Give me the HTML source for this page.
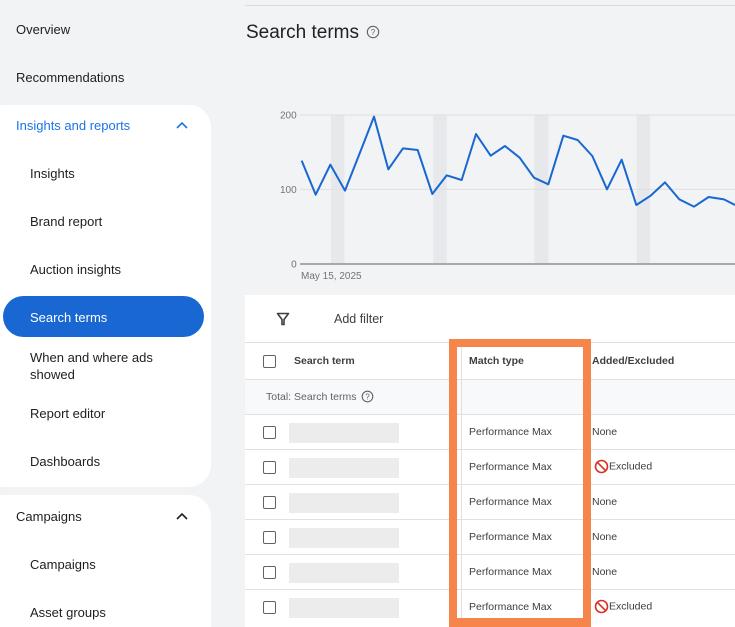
<!DOCTYPE html>
<html><head><meta charset="utf-8"><style>
*{margin:0;padding:0;box-sizing:border-box}
html{width:735px;height:627px;overflow:hidden}
body{width:735px;height:627px;overflow:hidden;background:#f1f3f4;font-family:"Liberation Sans",Arial,sans-serif;position:relative;color:#202124}
.a{position:absolute;white-space:nowrap}
.nav{font-size:13px;color:#202124}
.panel{position:absolute;background:#fff;border-radius:22px}
.row{position:absolute;left:245px;width:490px;height:35px;border-top:1px solid #e0e0e0;background:#fff}
.cb{position:absolute;left:18px;width:13px;height:13px;border:1.6px solid #5f6368;border-radius:2px;top:11px}
.ph{position:absolute;left:44px;top:8px;width:110px;height:20px;background:#ececec}
.mt{position:absolute;left:224px;top:11px;font-size:10.5px;color:#3c4043}
.ae{position:absolute;left:347px;top:11px;font-size:10.5px;color:#3c4043}
</style></head><body>
<div class="a nav" style="left:16px;top:22px">Overview</div>
<div class="a nav" style="left:16px;top:70px">Recommendations</div>
<div class="panel" style="left:-20px;top:105px;width:231px;height:382px"></div>
<div class="a nav" style="left:16px;top:118px;color:#1a73e8">Insights and reports</div>
<svg class="a" style="left:175px;top:120px" width="14" height="10"><path d="M2 8 L7 3 L12 8" fill="none" stroke="#1a73e8" stroke-width="1.6"/></svg>
<div class="a nav" style="left:30px;top:166px">Insights</div>
<div class="a nav" style="left:30px;top:214px">Brand report</div>
<div class="a nav" style="left:30px;top:262px">Auction insights</div>
<div class="a" style="left:3px;top:296px;width:201px;height:41px;background:#1967d2;border-radius:21px"></div>
<div class="a nav" style="left:30px;top:310px;color:#fff">Search terms</div>
<div class="a nav" style="left:30px;top:349px;line-height:17px;white-space:normal;width:140px">When and where ads showed</div>
<div class="a nav" style="left:30px;top:406px">Report editor</div>
<div class="a nav" style="left:30px;top:454px">Dashboards</div>
<div class="panel" style="left:-20px;top:495px;width:231px;height:132px;border-bottom-left-radius:0;border-bottom-right-radius:0"></div>
<div class="a nav" style="left:16px;top:509px">Campaigns</div>
<svg class="a" style="left:175px;top:511px" width="14" height="10"><path d="M2 8 L7 3 L12 8" fill="none" stroke="#202124" stroke-width="1.6"/></svg>
<div class="a nav" style="left:30px;top:557px">Campaigns</div>
<div class="a nav" style="left:30px;top:605px">Asset groups</div>

<div class="a" style="left:245px;top:5px;width:490px;height:1px;background:#dadce0"></div>
<div class="a" style="left:246px;top:22px;font-size:19px;color:#202124">Search terms</div>
<svg class="a" style="left:366px;top:25px" width="14" height="14"><circle cx="7" cy="7" r="5.7" fill="none" stroke="#5f6368" stroke-width="1.1"/><text x="7" y="10" font-size="8" text-anchor="middle" fill="#5f6368" font-family="Liberation Sans">?</text></svg>

<svg class="a" style="left:245px;top:90px" width="490" height="200" viewBox="0 0 1470 600">
<g fill="#e6e8eb"><rect x="258" y="75" width="40" height="447"/><rect x="565" y="75" width="40" height="447"/><rect x="868" y="75" width="42" height="447"/><rect x="1175" y="75" width="40" height="447"/></g>
<line x1="165" y1="75" x2="1470" y2="75" stroke="#e0e0e0" stroke-width="3"/>
<line x1="165" y1="298" x2="1470" y2="298" stroke="#e0e0e0" stroke-width="3"/>
<line x1="165" y1="522" x2="1470" y2="522" stroke="#9aa0a6" stroke-width="5"/>
<g font-family="Liberation Sans" font-size="30" fill="#70757a"><text x="155" y="85" text-anchor="end">200</text><text x="155" y="309" text-anchor="end">100</text><text x="155" y="533" text-anchor="end">0</text><text x="168" y="567">May 15, 2025</text></g>
<polyline fill="none" stroke="#1967d2" stroke-width="6" stroke-linejoin="round" points="170,212 212,314 256,224 300,302 344,190 387,80 430,238 474,175 518,180 562,312 605,256 650,270 693,132 737,197 780,168 824,203 867,263 910,283 955,137 998,150 1042,198 1086,298 1130,209 1174,345 1217,317 1260,277 1303,328 1347,350 1391,321 1437,328 1470,345"/>
</svg>

<div class="a" style="left:245px;top:295px;width:490px;height:332px;background:#fff"></div>
<svg class="a" style="left:276px;top:312px" width="14" height="14"><path d="M1.5 1.5 H12.5 L8 7.5 V12.5 H6 V7.5 Z" fill="none" stroke="#3c4043" stroke-width="1.6" stroke-linejoin="round"/></svg>
<div class="a" style="left:334px;top:312px;font-size:12.5px;color:#3c4043">Add filter</div>
<div class="row" style="top:342px;height:37px"><div class="cb" style="top:12px"></div><div class="a" style="left:49px;top:12px;font-size:10.5px;color:#3c4043;font-weight:bold">Search term</div><div class="a" style="left:224px;top:12px;font-size:10.5px;color:#3c4043;font-weight:bold">Match type</div><div class="a" style="left:347px;top:12px;font-size:10.5px;color:#3c4043;font-weight:bold">Added/Excluded</div></div>
<div class="row" style="top:379px;background:#f8f9fa"><div class="a" style="left:21px;top:11px;font-size:10.5px;color:#5f6368">Total: Search terms</div><svg class="a" style="left:116px;top:10px" width="13" height="13"><circle cx="6.5" cy="6.5" r="5.3" fill="none" stroke="#5f6368" stroke-width="1.1"/><text x="6.5" y="9.5" font-size="8" text-anchor="middle" fill="#5f6368" font-family="Liberation Sans">?</text></svg></div>
<div class="row" style="top:414px"><div class="cb"></div><div class="ph"></div><div class="mt">Performance Max</div><div class="ae">None</div></div>
<div class="row" style="top:449px"><div class="cb"></div><div class="ph"></div><div class="mt">Performance Max</div><div class="ae" style="left:349px;top:9px"><svg width="15" height="15" style="vertical-align:middle"><circle cx="7.5" cy="7.5" r="6" fill="none" stroke="#d93025" stroke-width="1.6"/><line x1="3.3" y1="3.3" x2="11.7" y2="11.7" stroke="#d93025" stroke-width="1.6"/></svg>Excluded</div></div>
<div class="row" style="top:484px"><div class="cb"></div><div class="ph"></div><div class="mt">Performance Max</div><div class="ae">None</div></div>
<div class="row" style="top:519px"><div class="cb"></div><div class="ph"></div><div class="mt">Performance Max</div><div class="ae">None</div></div>
<div class="row" style="top:554px"><div class="cb"></div><div class="ph"></div><div class="mt">Performance Max</div><div class="ae">None</div></div>
<div class="row" style="top:589px;height:38px"><div class="cb"></div><div class="ph"></div><div class="mt">Performance Max</div><div class="ae" style="left:349px;top:9px"><svg width="15" height="15" style="vertical-align:middle"><circle cx="7.5" cy="7.5" r="6" fill="none" stroke="#d93025" stroke-width="1.6"/><line x1="3.3" y1="3.3" x2="11.7" y2="11.7" stroke="#d93025" stroke-width="1.6"/></svg>Excluded</div></div>
<div class="a" style="left:461px;top:342px;width:1px;height:285px;background:#e0e0e0"></div>
<div class="a" style="left:449px;top:339px;width:142px;height:288px;border:8px solid #f5854a;border-bottom-width:9px"></div>
</body></html>
